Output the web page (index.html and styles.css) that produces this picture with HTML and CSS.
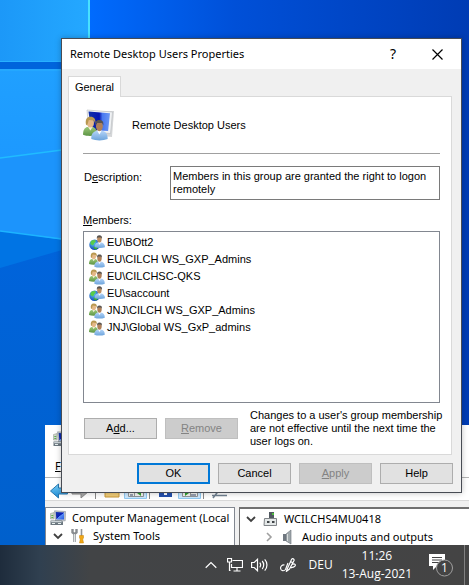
FILE: index.html
```html
<!DOCTYPE html>
<html lang="en">
<head>
<meta charset="utf-8">
<title>Remote Desktop Users Properties</title>
<link rel="stylesheet" href="styles.css">
</head>
<body>
<svg class="defs" aria-hidden="true">
  <defs>
    <linearGradient id="gLand" x1="0" y1="0" x2="1" y2="0"><stop offset=".18" stop-color="#006cff"/><stop offset=".5" stop-color="#0050d8"/><stop offset="1" stop-color="#003cb4"/></linearGradient>
    <linearGradient id="gPane" x1="0" y1="0" x2="1" y2="0"><stop offset="0" stop-color="#1c98f8"/><stop offset="1" stop-color="#24a8ff"/></linearGradient>
    <linearGradient id="gPane2" x1="0" y1="0" x2="0" y2="1"><stop offset="0" stop-color="#20a0ff"/><stop offset="1" stop-color="#1890ff"/></linearGradient>
    <linearGradient id="gLow" x1="0" y1="0" x2="0" y2="1"><stop offset="0" stop-color="#0064dc"/><stop offset="1" stop-color="#0060cc"/></linearGradient>
    <linearGradient id="gScreen" x1="0" y1="0" x2="1" y2="1"><stop offset="0" stop-color="#1438a8"/><stop offset=".5" stop-color="#0a20b8"/><stop offset=".52" stop-color="#5c90f4"/><stop offset="1" stop-color="#2458e0"/></linearGradient>
    <linearGradient id="gBigScreen" x1="0" y1="0" x2="1" y2="0"><stop offset="0" stop-color="#1030a8"/><stop offset=".5" stop-color="#0414b0"/><stop offset=".65" stop-color="#4878f0"/><stop offset="1" stop-color="#6c98f4"/></linearGradient>
    <linearGradient id="gGreen" x1="0" y1="0" x2="0" y2="1"><stop offset="0" stop-color="#9cc878"/><stop offset="1" stop-color="#5c9444"/></linearGradient>
    <linearGradient id="gBlue" x1="0" y1="0" x2="0" y2="1"><stop offset="0" stop-color="#b4d4f8"/><stop offset="1" stop-color="#6ca4dc"/></linearGradient>
    <linearGradient id="gArrow" x1="0" y1="0" x2="0" y2="1"><stop offset="0" stop-color="#7cd4fc"/><stop offset="1" stop-color="#1884d0"/></linearGradient>
    <radialGradient id="gGlobe" cx=".4" cy=".35" r=".7"><stop offset="0" stop-color="#60c8f8"/><stop offset="1" stop-color="#0c3cb0"/></radialGradient>
  </defs>
  <symbol id="group" viewBox="0 0 16 16">
    <path d="M0 12c0-3 1-4.500 2.700-5h3.600C8 7.500 9 9 9 12c-2.500 1-6.500 1-9 0z" fill="url(#gGreen)"/>
    <path d="M3.200 6.800 4.700 9.200l1.500-2.400z" fill="#f4f4e0"/>
    <ellipse cx="4.800" cy="4.300" rx="2.200" ry="3" fill="#e4b888"/>
    <path d="M1.900 5.500C1.300 2 2.500.4 4.800.4s3.500 1.400 3.100 4.600L7 2.900 3.700 2.600 2.700 6z" fill="#b89850"/>
    <path d="M5.300 14.700c0-3.400 1.400-4.900 3.800-5.200h2.800c2.600.3 3.900 1.900 3.900 5.200-3 1.200-7.500 1.200-10.500 0z" fill="url(#gBlue)"/>
    <path d="m9 9.300 1.500 2.600L12 9.300z" fill="#fff"/>
    <ellipse cx="10.500" cy="6.600" rx="2.200" ry="3.100" fill="#b08058"/>
    <path d="M8 6C7.700 3.500 8.800 2.500 10.500 2.500S13.400 3.600 13 6l-.8-1.500H8.900z" fill="#585450"/>
  </symbol>
  <symbol id="netuser" viewBox="0 0 16 16">
    <circle cx="5.600" cy="9.700" r="5.300" fill="url(#gGlobe)"/>
    <path d="M2 6C4 4.500 6 4.500 7 6L5.500 8 4 10.500 1.300 9z" fill="#58cc48"/><path d="m4.500 12 3-1.500 2 1.500-2.300 2.600-1.700-.6z" fill="#38b030"/>
    <path d="M5.500 12.300c0-3 1.500-4.600 4-5h2c2.700.4 4.500 2 4.500 5-3 .9-7.500.9-10.500 0z" fill="url(#gBlue)"/>
    <path d="m9 7.300 1.500 2.500L12 7.300z" fill="#fff"/>
    <ellipse cx="10.400" cy="4.200" rx="2.200" ry="3.200" fill="#bc8c60"/>
    <path d="M7.900 4C7.500 1.300 8.600.3 10.400.3s3.100 1.200 2.600 3.700l-.9-1.600H8.800z" fill="#585450"/>
  </symbol>
  <symbol id="computer" viewBox="0 0 16 16">
    <path d="m4.500.8 11 .7-.3 9.300-9.700.2z" fill="#c8ccd0" stroke="#889098" stroke-width=".6"/>
    <path d="m5.700 2 8.500.5-.2 6.900-7.600.2z" fill="url(#gScreen)"/>
    <path d="M.5 3.500 4 2.500V9H.5z" fill="#d0d8cc" stroke="#889088" stroke-width=".5"/><path d="M1.300 5h2v1h-2zm0 2h2v1h-2z" fill="#60b050"/>
    <path d="M.5 10.500h11l1.500 1.300V15H.5z" fill="#6c7880"/><path d="M1.200 11h10l1 1.200h-11z" fill="#ccd4d8"/><path d="M2 13h3v1H2zm6 0h3v1H8z" fill="#e8f0f0"/>
  </symbol>
</svg>

<main class="desktop">
  <svg class="wallpaper" viewBox="0 0 469 545" preserveAspectRatio="none" aria-hidden="true">
    <path d="M0 0h469v545H0z" fill="url(#gLand)"/>
    <path d="M0 0h88v62H0z" fill="url(#gPane)"/>
    <path d="M0 69h90v200H0z" fill="url(#gPane2)"/>
    <path d="M0 62h88v7H0z" fill="#0064dc"/>
    <path d="M0 61.500h62M0 70h62" stroke="#28b0ff"/>
    <path d="M88 0h2v60h-2z" fill="#48e0ff"/>
    <path d="M0 158 62 150v90L0 231z" fill="#1c94fc"/>
    <path d="m0 158 62-8" stroke="#20bcff" stroke-width="1.500"/>
    <path d="m0 231 62 9v305H0z" fill="url(#gLow)"/>
    <path d="m0 231 62 9v10L0 268z" fill="#0074e4"/>
    <path d="m0 231 62 8" stroke="#1cb4ff" stroke-width="1.500"/>
  </svg>

  <section class="console" aria-label="Computer Management">
    <div class="console-title"><svg class="icon"><use href="#computer"/></svg></div>
    <nav class="menu"><a href="#file"><u>F</u>ile</a></nav>
    <div class="toolbar">
      <svg width="184" height="20" viewBox="0 0 184 20" aria-hidden="true">
        <path d="m.5 11 8-7v4h9v6h-9v4z" fill="url(#gArrow)" stroke="#2878b0"/>
        <path d="m39 11-8-7v4h-9v6h9v4z" fill="#a8a8a8" stroke="#888"/>
        <path d="M45.500 1v18M99.500 1v18M153.500 1v18" stroke="#888"/>
        <path d="M55 6h6l2 2h6v9H55z" fill="#f0cc78" stroke="#c89838"/>
        <path d="M74.500.5h22v18h-22zM128.500.5h22v18h-22z" fill="#cce8ff" stroke="#90c8f0"/>
        <path d="M78.500 3.500h15v13h-15z" fill="#f4f4f0" stroke="#909498"/><path d="M80 11h3v2h-3zm0 3h3v2h-3z" fill="#98a0b0"/><path d="m91 10-4 3 4 3z" fill="#30a030"/><path d="M84.500 8v8" stroke="#999"/>
        <path d="M109 4h13v13h-13z" fill="#2450ac"/><path d="M114 12h3v3h-3z" fill="#fff"/>
        <path d="M132.500 3.500h15v13h-15z" fill="#f4f4f0" stroke="#909498"/><path d="m135 10 4 3-4 3z" fill="#30a030"/><path d="M141 10h5v2h-5zm0 4h5v2h-5z" fill="#98a0b0"/><path d="M140.500 8v8" stroke="#999"/>
        <path d="M167 9h11M162 15.500h15M163 18l7-9" stroke="#708090" stroke-width="1.500"/>
      </svg>
    </div>
    <div class="panes">
      <ul class="pane tree">
        <li><svg class="icon"><use href="#computer"/></svg><span>Computer Management (Local</span></li>
        <li class="sub">
          <svg class="chev" viewBox="0 0 10 10"><path d="m1 3 4 4 4-4" fill="none" stroke="#404040" stroke-width="1.800"/></svg>
          <svg class="icon" viewBox="0 0 16 16"><path d="M2.500 1v3.500L4.500 6l2-1.500V1M4.500 6v8" fill="none" stroke="#888c90" stroke-width="2.400"/><path d="M4.500 6v8" stroke="#e0e4e4"/><path d="M11.500 1v7" stroke="#909498" stroke-width="1.600"/><path d="M9.500 7.500h4V10l-.8 1 .8 4h-4l.8-4-.8-1z" fill="#f0a818" stroke="#c88000" stroke-width=".5"/></svg>
          <span>System Tools</span></li>
      </ul>
      <ul class="pane devices">
        <li>
          <svg class="chev" viewBox="0 0 10 10"><path d="m1 3 4 4 4-4" fill="none" stroke="#404040" stroke-width="1.800"/></svg>
          <svg class="icon" viewBox="0 0 16 16"><path d="M7 1h5v9H7z" fill="#505860"/><path d="M10 2h2v2h-2z" fill="#50c040"/><path d="M2.500 7.500h12v7H2z" fill="#e4e8e8" stroke="#808488"/><path d="M5 10h2.500v2H5zm5 0h2.500v2H10z" fill="#404448"/></svg>
          <span>WCILCHS4MU0418</span></li>
        <li class="sub">
          <svg class="chev" viewBox="0 0 10 10"><path d="m3 1 4 4-4 4" fill="none" stroke="#a0a0a0" stroke-width="1.600"/></svg>
          <svg class="icon" viewBox="0 0 16 16"><path d="M3 5h3v7H3z" fill="#707880"/><path d="m6 5 5-4v14l-5-3z" fill="#a0a8ac" stroke="#687078" stroke-width=".6"/><path d="M7.500 5v7" stroke="#d8dcdc"/></svg>
          <span>Audio inputs and outputs</span></li>
      </ul>
    </div>
  </section>

  <section class="dialog" role="dialog" aria-labelledby="dlg-title">
    <header class="titlebar">
      <h1 id="dlg-title">Remote Desktop Users Properties</h1>
      <button class="caption" type="button" aria-label="Help on items">?</button>
      <button class="caption" type="button" aria-label="Close"><svg width="11" height="11" viewBox="0 0 11 11"><path d="m.5.5 10 10m0-10-10 10" stroke="#000" stroke-width="1.200"/></svg></button>
    </header>
    <div class="dialog-body">
      <div role="tablist"><button class="tab" type="button" role="tab" aria-selected="true">General</button></div>
      <div class="sheet" role="tabpanel">
        <div class="heading">
          <svg class="big-icon" viewBox="0 0 32 32" aria-hidden="true">
            <path d="m5 2 26 0-2 26-21-2z" fill="#d4d6d8"/><path d="m4 1 25.500 2-2 21.500L6 23z" fill="#f0f2f4" stroke="#b8bcc0" stroke-width=".6"/>
            <path d="m5.500 2.500 21.500 1.700-1.900 17.800L8 21z" fill="url(#gBigScreen)"/>
            <svg x="0" y="7" width="25" height="25"><use href="#group"/></svg>
          </svg>
          <span>Remote Desktop Users</span>
        </div>
        <div class="field">
          <label for="desc">D<u>e</u>scription:</label>
          <textarea id="desc" rows="2" readonly>Members in this group are granted the right to logon remotely</textarea>
        </div>
        <div class="members-label" id="members-label"><u>M</u>embers:</div>
        <ul class="members" role="listbox" tabindex="0" aria-labelledby="members-label">
          <li role="option"><svg class="icon"><use href="#netuser"/></svg>EU\BOtt2</li>
          <li role="option"><svg class="icon"><use href="#group"/></svg>EU\CILCH WS_GXP_Admins</li>
          <li role="option"><svg class="icon"><use href="#group"/></svg>EU\CILCHSC-QKS</li>
          <li role="option"><svg class="icon"><use href="#netuser"/></svg>EU\saccount</li>
          <li role="option"><svg class="icon"><use href="#group"/></svg>JNJ\CILCH WS_GXP_Admins</li>
          <li role="option"><svg class="icon"><use href="#group"/></svg>JNJ\Global WS_GxP_admins</li>
        </ul>
        <div class="edit-row">
          <button class="btn" type="button">A<u>d</u>d...</button>
          <button class="btn" type="button" disabled><u>R</u>emove</button>
          <p>Changes to a user's group membership are not effective until the next time the user logs on.</p>
        </div>
      </div>
      <footer class="actions">
        <button class="btn default" type="button">OK</button>
        <button class="btn" type="button">Cancel</button>
        <button class="btn" type="button" disabled><u>A</u>pply</button>
        <button class="btn" type="button">Help</button>
      </footer>
    </div>
  </section>
</main>

<footer class="taskbar">
  <button type="button" class="tray" aria-label="Show hidden icons"><svg width="12" height="8" viewBox="0 0 12 8"><path d="m.7 6.700 5.300-5.200 5.300 5.200"/></svg></button>
  <button type="button" class="tray" aria-label="Network"><svg width="16" height="14" viewBox="0 0 16 14"><path d="M5.500 2.500h10v7H4.500V6M10 9.500v3.500M6.500 13h7M.5.500h4V4h-4zM2.500 4v8.500h1"/></svg></button>
  <button type="button" class="tray" aria-label="Volume"><svg width="17" height="14" viewBox="0 0 17 14"><path d="M.6 4.500h2.600L6.500 1.300v11.400L3.200 9.500H.6zM8.700 4.700c1 1.200 1 3.400 0 4.600M11.200 3c2 2.200 2 5.800 0 8M13.700 1.300c3 3 3 8.400 0 11.400"/></svg></button>
  <button type="button" class="tray" aria-label="Windows Ink"><svg width="17" height="14" viewBox="0 0 17 14"><path d="M7 11.500 11.500 1.500c1-1.500 3-.5 2.500 1L9.500 11 6.500 13.300zM10.500 3.500l2.500 1.200M4.500 7C2 6.500.3 8.500.6 10.500.9 13 4 13.500 5.500 11.500L8 5M12.500 6.500c2-1.500 4 .5 2 2s-2.500.5-3.500 1.500"/></svg></button>
  <button type="button" class="lang">DEU</button>
  <button type="button" class="clock"><time>11:26</time><span>13-Aug-2021</span></button>
  <button type="button" class="notice" aria-label="Notifications">
    <svg width="26" height="24" viewBox="0 0 26 24"><path d="M1 1h16v12H9l-4 4v-4H1z" fill="#fff"/><path d="M4 4.500h10M4 7h10M4 9.500h7" stroke="#444"/><circle cx="16.500" cy="15" r="8" fill="#444" stroke="#a0a0a0"/></svg>
    <span class="badge">1</span>
  </button>
  <button type="button" class="peek" aria-label="Show desktop"></button>
</footer>
</body>
</html>
```
FILE: styles.css
```css
* { box-sizing: border-box; }

body {
  margin: 0;
  display: flex;
  flex-direction: column;
  height: 100vh;
  overflow: hidden;
  font: 11px/16px "Noto Sans", "Open Sans", sans-serif;
  color: #000;
}

ul { list-style: none; margin: 0; padding: 0; }
button { font: inherit; color: inherit; padding: 0; border: 0; background: none; }
.defs { position: absolute; width: 0; height: 0; }
.icon { width: 16px; height: 16px; flex: none; }

.desktop { position: relative; flex: 1; overflow: hidden; background: #0048cc; }
.wallpaper { display: block; width: 100%; height: 100%; }

/* Computer Management window, behind the dialog */
.console {
  position: absolute;
  left: 45px;
  right: 0;
  top: 425px;
  bottom: 0;
  display: flex;
  flex-direction: column;
  background: #fff;
}
.console-title { padding: 6px 8px; height: 31px; }
.menu { padding: 2px 10px; height: 22px; border-bottom: 1px solid #b4b4b4; }
.menu a { color: #000; text-decoration: none; }
.toolbar { height: 23px; padding: 2px 5px; border-bottom: 1px solid #d8d8d8; overflow: hidden; }
.toolbar svg { display: block; }
.panes { flex: 1; display: flex; gap: 4px; padding-top: 6px; background: #f0f0f0; overflow: hidden; }
.pane { background: #fff; border: 1px solid #828790; border-bottom: 0; padding: 1px 4px; overflow: hidden; }
.tree { flex: 0 0 190px; }
.devices { flex: 1; padding-left: 6px; border-width: 2px 0 0 1px; border-color: #707070; }
.pane li { display: flex; align-items: center; height: 18px; gap: 6px; white-space: nowrap; }
.tree .sub { padding-left: 3px; gap: 7px; }
.devices .sub { padding-left: 18px; }
.chev { width: 10px; height: 10px; flex: none; }

/* Properties dialog */
.dialog {
  position: absolute;
  left: 61px;
  right: 7px;
  top: 38px;
  border: 1px solid #484c54;
  background: #f0f0f0;
  box-shadow: 0 0 6px rgba(0, 0, 0, .25);
}
.titlebar { display: flex; align-items: center; height: 30px; padding-left: 8px; background: #fff; }
.titlebar h1 { flex: 1; margin: 0; font-size: 11px; font-weight: 400; white-space: nowrap; }
.caption { width: 44px; height: 30px; font-size: 14px; }
.caption svg { display: block; margin: 0 auto; }
.caption:last-child { margin-right: 2px; }
.dialog-body { padding: 7px 8px 8px 6px; font: 11px/13px "Liberation Sans", Arial, sans-serif; }
.tab {
  display: block;
  position: relative;
  width: 53px;
  height: 21px;
  margin-bottom: -1px;
  border: 1px solid #d9d9d9;
  border-bottom: 0;
  background: #fff;
}
.sheet { margin-right: 1px; padding: 12px 11px 6px 14px; border: 1px solid #d9d9d9; background: #fff; }
.heading { display: flex; align-items: center; gap: 17px; height: 45px; padding-bottom: 12px; border-bottom: 1px solid #a0a0a0; }
.big-icon { width: 32px; height: 32px; flex: none; }
.field { display: flex; margin: 12px 0 14px; }
.field label { flex: 0 0 87px; padding: 5px 1px; }
.field textarea {
  flex: 1;
  min-width: 0;
  height: 34px;
  padding: 3px 2px;
  border: 1px solid #7a7a7a;
  font: inherit;
  color: inherit;
  resize: none;
  overflow: hidden;
  outline: 0;
}
.members-label { margin-bottom: 4px; }
.members { height: 172px; padding: 2px 5px; border: 1px solid #828790; overflow: auto; outline: 0; }
.members li { display: flex; align-items: center; gap: 2px; height: 17px; }
.edit-row { display: flex; align-items: center; gap: 8px; margin: 6px -8px 0 0; padding-left: 1px; }
.edit-row p { flex: 1; margin: 0 0 0 4px; }
.btn { flex: 0 0 73px; height: 21px; border: 1px solid #adadad; background: #e1e1e1; }
.btn:disabled { border-color: #bfbfbf; background: #ccc; color: #838383; }
.btn.default { border: 2px solid #0078d7; }
.actions { display: flex; justify-content: flex-end; gap: 8px; margin-top: 8px; }

/* Taskbar */
.taskbar {
  display: flex;
  align-items: center;
  justify-content: flex-end;
  height: 40px;
  font: 12px/16px "Open Sans", "Noto Sans", sans-serif;
  color: #fff;
  background: linear-gradient(to right, #1e2c3c, #304050 40px, #424446 90px, #444);
}
.tray { margin-right: 8px; }
.tray svg { display: block; fill: none; stroke: #fff; stroke-width: 1.2; }
.tray:first-child { margin-right: 10px; }
.tray:nth-child(3), .tray:nth-child(4) { margin-right: 12px; }
.clock { display: flex; flex-direction: column; align-items: center; gap: 2px; margin: 0 16px 0 9px; white-space: nowrap; }
.notice { position: relative; width: 26px; height: 24px; margin-right: 10px; }
.notice svg { display: block; }
.badge { position: absolute; left: 13px; top: 7px; font-size: 12px; }
.peek { width: 5px; height: 40px; border-left: 1px solid #808080; }
```
